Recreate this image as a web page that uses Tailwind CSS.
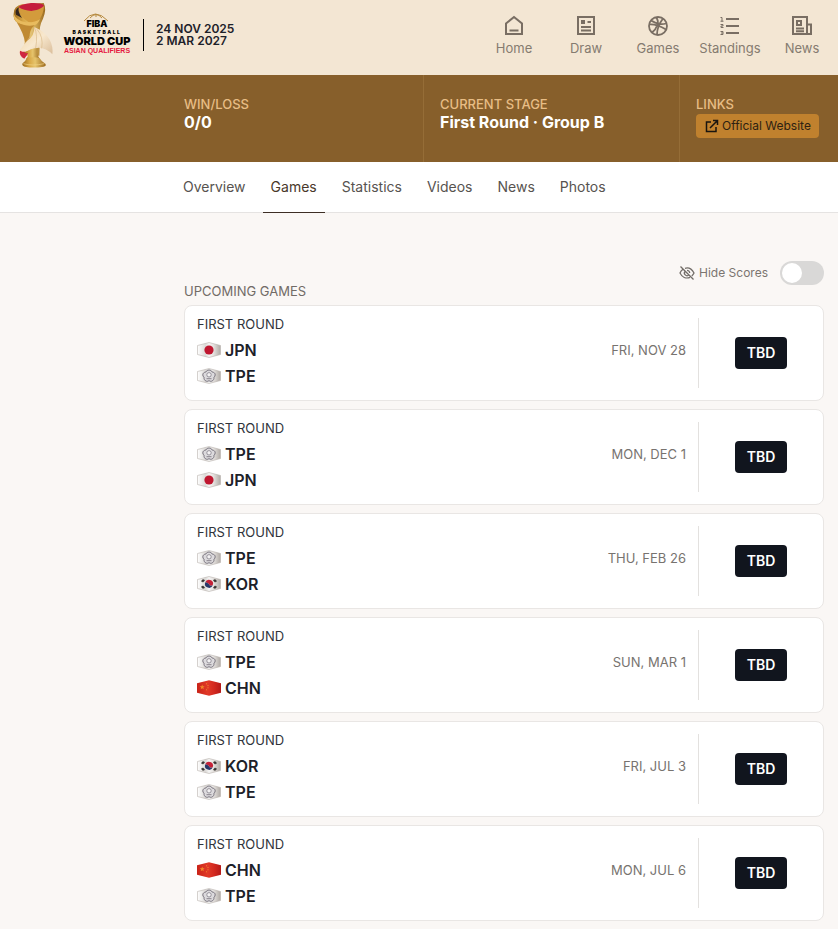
<!DOCTYPE html>
<html lang="en">
<head>
  <meta charset="UTF-8">
  <meta name="viewport" content="width=device-width, initial-scale=1.0">
  <title>Games - FIBA Basketball World Cup Asian Qualifiers</title>
  <script src="https://cdn.jsdelivr.net/npm/@tailwindcss/browser@4"></script>
</head>
<body class="min-h-screen overflow-x-hidden bg-[#faf7f5] font-['Inter','Liberation_Sans',sans-serif] text-[#1d2129]">
  <!-- Flag and gradient definitions -->
  <svg class="absolute h-0 w-0" aria-hidden="true">
    <defs>
      <linearGradient id="silver" x1="0" x2="1">
        <stop offset="0" stop-color="#ffffff"/><stop offset=".35" stop-color="#dcdad7"/><stop offset=".5" stop-color="#f5f5f5"/><stop offset=".7" stop-color="#e4e1de"/><stop offset="1" stop-color="#b0aaa5"/>
      </linearGradient>
      <linearGradient id="red" x1="0" x2="1">
        <stop offset="0" stop-color="#c92318"/><stop offset=".45" stop-color="#e13a28"/><stop offset=".7" stop-color="#d42a20"/><stop offset="1" stop-color="#b51a18"/>
      </linearGradient>
      <symbol id="flag-JPN" viewBox="0 0 24 16">
        <path d="M.5 3.500 12 .5l11.500 3v9L12 15.500.5 12.500z" fill="url(#silver)" stroke="#b8b2ac" stroke-width=".6"/>
        <circle cx="12" cy="8" r="4.600" fill="#bf1730"/>
      </symbol>
      <symbol id="flag-TPE" viewBox="0 0 24 16">
        <path d="M.5 3.500 12 .5l11.500 3v9L12 15.500.5 12.500z" fill="url(#silver)" stroke="#b8b2ac" stroke-width=".6"/>
        <path d="M12 2c1.600 0 2.700.9 3.100 2 1.700.1 3.200 1.200 3.100 2.900 0 1-.5 1.700-1.200 2.300.2 1.700-.6 3.500-2.300 4-1.100.3-2.100 0-2.700-.5-.6.5-1.600.8-2.700.5-1.700-.5-2.500-2.300-2.300-4-.7-.6-1.200-1.300-1.200-2.300 0-1.700 1.400-2.800 3.100-2.900.4-1.100 1.500-2 3.100-2z" fill="#dcdadd" stroke="#77727c" stroke-width="1"/>
        <circle cx="12" cy="6.800" r="2.200" fill="#f3f1f2" stroke="#77727c" stroke-width=".7"/>
        <path d="M9.500 10.700h5" stroke="#88838c"/>
      </symbol>
      <symbol id="flag-KOR" viewBox="0 0 24 16">
        <path d="M.5 3.500 12 .5l11.500 3v9L12 15.500.5 12.500z" fill="url(#silver)" stroke="#b8b2ac" stroke-width=".6"/>
        <path d="M8.200 6.500a4 4 0 0 1 7.600 2.600c-1.300 1.500-2.900.6-3.800-.9-1-1.500-3-2-3.800-1.700z" fill="#c42137"/>
        <path d="M8.200 6.500a4 4 0 0 0 7.600 2.600c-1.300 1.500-2.900.6-3.800-.9-1-1.500-3-2-3.800-1.700z" fill="#283768"/>
        <path d="m4.500 5.500 2-2M5.500 6l2-2M4.500 10.500l2 2M5.500 10l2 2M17.500 3.500l2 2M16.500 4l2 2M17.500 12.500l2-2M16.500 12l2-2" stroke="#393634" stroke-width="1.200"/>
      </symbol>
      <symbol id="flag-CHN" viewBox="0 0 24 16">
        <path d="M0 3.200 12 .3l12 2.900v9.600l-12 2.900-12-2.900z" fill="url(#red)"/>
        <path d="m5.200 4.500.7 1.700 1.800.1-1.400 1.200.5 1.800-1.600-1-1.500 1 .4-1.800-1.400-1.200 1.800-.1z" fill="#f0872a"/>
        <path d="M9 3.800h1M10.500 5.500h1M10.500 7.800h1M9 9.800h1" stroke="#f0872a"/>
      </symbol>
    </defs>
  </svg>

  <header class="flex h-[75px] items-start justify-between bg-[#f3e6d3]">
    <a href="#" class="flex items-start pl-3" aria-label="FIBA Basketball World Cup Asian Qualifiers">
      <!-- Trophy -->
      <svg class="mt-[2px] h-[66px] w-[42px]" viewBox="0 0 126 198" aria-hidden="true">
        <defs>
          <linearGradient id="gold" x1="0" x2="1">
            <stop offset="0" stop-color="#9b6a1d"/><stop offset=".3" stop-color="#d8a746"/><stop offset=".55" stop-color="#e6c46c"/><stop offset="1" stop-color="#9a681c"/>
          </linearGradient>
          <linearGradient id="cream" x1="0" x2="1" y2="1">
            <stop offset="0" stop-color="#efcf9d"/><stop offset=".5" stop-color="#f8e8ce"/><stop offset="1" stop-color="#d7b995"/>
          </linearGradient>
        </defs>
        <path d="M5 35Q5 12 30 7l65-4q10 18-2 47-13 24-9 49l-2 62H38V97Q30 72 15 61 3 52 5 35z" fill="url(#gold)"/>
        <ellipse cx="58" cy="15" rx="38" ry="12" fill="#c51d3d" transform="rotate(-4 58 15)"/>
        <path d="M20 16q16 10 38 11 22-1 38-15-2 24-13 39-20 17-35 8Q23 44 20 16z" fill="#d39b3c"/>
        <path d="M20 16Q17 31 30 48L12 38Q7 24 20 16z" fill="#32251f"/>
        <path d="M5 35q8 21 37 26 28 1 42-10-5 15-17 19-30 3-52-9Q3 51 5 35z" fill="#e8bb5e"/>
        <path d="M14 61q25 14 54 9-16 12-16 40l-12 14q-6-32-26-63z" fill="#c08a33"/>
        <path d="M67 75q32 14 46 38 11 20 8 44-18-20-42-20l-18 5q-20 4-32 23-8-4-6-20 12-17 23-29 21-12 21-41z" fill="url(#cream)"/>
        <path d="M67 75q11 24 4 63M75 82q20 22 14 57M38 124q18-15 25-44" fill="none" stroke="#dab98a" stroke-width="2"/>
        <path d="M24 146q-4 16 13 24l16-22q-18 4-29-2z" fill="#cf2742"/>
        <path d="M36 153q21-15 41-14-3 21 7 33H42q8-9 7-18z" fill="url(#gold)"/>
        <path d="M44 169q20-6 39 0 4 8 17 16 5 8-10 10-27 4-52-1-10-4-6-10 9-7 12-15z" fill="url(#gold)"/>
        <path d="M34 185q27 8 63 0" fill="none" stroke="#f3d588" stroke-width="2"/>
      </svg>
      <div class="ml-2 flex w-[70px] flex-col items-center pt-4 whitespace-nowrap text-black">
        <div class="relative h-3 text-[9px] leading-4 font-black">
          <svg class="absolute -top-1 -left-1 h-3 w-7" viewBox="0 0 28 12" fill="none" stroke="#b68a3f" aria-hidden="true"><path d="M2 9Q13-5 26 9M8 6Q14-1 20 6M14 2v3"/></svg>
          <span class="relative">FIBA</span>
        </div>
        <div class="text-[5px] leading-2 font-black tracking-[.3em]">BASKETBALL</div>
        <div class="text-[11px] leading-[10px] font-black">WORLD CUP</div>
        <div class="font-['Liberation_Sans_Narrow','Liberation_Sans',sans-serif] text-[7px] leading-[10px] font-bold text-[#e51941]">ASIAN QUALIFIERS</div>
      </div>
      <div class="mt-[19px] ml-[11px] h-8 w-px bg-black"></div>
      <div class="mt-[23px] ml-3 text-xs leading-3 font-semibold whitespace-nowrap">24 NOV 2025<br>2 MAR 2027</div>
    </a>
    <nav class="flex pt-3 text-[13px] leading-4 text-[#857b70]" aria-label="Main">
      <a href="#" class="flex w-18 flex-col items-center">
        <svg class="h-7 w-7" viewBox="0 0 28 28" fill="none" stroke="#796e63" stroke-width="2" aria-hidden="true"><path d="M6 11.500 14 5l8 6.500V22H6zM9.500 18.500h9"/></svg>
        Home
      </a>
      <a href="#" class="flex w-18 flex-col items-center">
        <svg class="h-7 w-7" viewBox="0 0 28 28" fill="none" stroke="#796e63" stroke-width="2" aria-hidden="true"><path d="M6 5h16v17H6zM9 15h10M9 18.500h10M15.500 10H19"/><path d="M9 8h4v4H9z" fill="#796e63" stroke="none"/></svg>
        Draw
      </a>
      <a href="#" class="flex w-18 flex-col items-center">
        <svg class="h-7 w-7" viewBox="0 0 28 28" fill="none" stroke="#796e63" stroke-width="1.800" aria-hidden="true"><circle cx="14" cy="14" r="9"/><path d="M5 12.500c6-.5 12 2 17 5M12 5.500c4 4 1 11-4 15M19 6.500c-3 4-6 10-6 16M7 8.500c6 4 11 4 15 3"/></svg>
        Games
      </a>
      <a href="#" class="flex w-18 flex-col items-center">
        <svg class="h-7 w-7" viewBox="0 0 28 28" fill="none" stroke="#796e63" aria-hidden="true"><path d="M10 7H23M10 14H23M10 21H23" stroke-width="2"/><path d="M4.500 5.500h1.500v4M4.500 9.200h3M4.500 12.500h2.500v1.500H5v1.500h2.500M4.500 19.500h2.500v3H4.500M5 21h2"/></svg>
        Standings
      </a>
      <a href="#" class="flex w-18 flex-col items-center">
        <svg class="h-7 w-7" viewBox="0 0 28 28" fill="none" stroke="#796e63" stroke-width="2" aria-hidden="true"><path d="M19 22H5V5h14zM19 12.500h4V22h-4M8 16.500h8M8 19.300h8"/><path d="M9 9h4v4H9z"/></svg>
        News
      </a>
    </nav>
  </header>

  <!-- Team summary -->
  <section class="flex h-[87px] bg-[#875f2b] pl-[168px] text-white">
    <div class="w-64 shrink-0 border-r border-[#956d37] px-4 pt-5">
      <h2 class="text-[13px] leading-[18px] font-medium text-[#e8bd85]">WIN/LOSS</h2>
      <p class="text-base leading-[18px] font-bold">0/0</p>
    </div>
    <div class="w-64 shrink-0 border-r border-[#956d37] px-4 pt-5">
      <h2 class="text-[13px] leading-[18px] font-medium text-[#e8bd85]">CURRENT STAGE</h2>
      <p class="text-base leading-[18px] font-bold whitespace-nowrap">First Round · Group B</p>
    </div>
    <div class="flex flex-1 flex-col items-start px-4 pt-5">
      <h2 class="text-[13px] leading-[18px] font-medium text-[#e8bd85]">LINKS</h2>
      <a href="#" class="mt-px inline-flex h-6 items-center gap-0.5 rounded bg-[#c0812e] px-2 text-xs whitespace-nowrap text-[#2e2112]">
        <svg class="h-4 w-4" viewBox="0 0 16 16" fill="none" stroke="#19150f" stroke-width="1.500" aria-hidden="true"><path d="M7 4H2.500v9.500H12V9M9 2.500h4.500V7M13.500 2.500 6 10"/></svg>
        Official Website
      </a>
    </div>
  </section>

  <nav class="flex h-[51px] gap-[9px] border-b border-[#e5e3e2] bg-white pl-[175px] text-sm text-[#57534f]" aria-label="Team">
    <a href="#" class="flex h-[51px] items-center border-b border-transparent px-2">Overview</a>
    <a href="#" class="flex h-[51px] items-center border-b border-[#3d2e25] px-2 text-[#49382a]" aria-current="page">Games</a>
    <a href="#" class="flex h-[51px] items-center border-b border-transparent px-2">Statistics</a>
    <a href="#" class="flex h-[51px] items-center border-b border-transparent px-2">Videos</a>
    <a href="#" class="flex h-[51px] items-center border-b border-transparent px-2">News</a>
    <a href="#" class="flex h-[51px] items-center border-b border-transparent px-2">Photos</a>
  </nav>

  <main class="pt-12 pr-3.5 pb-2 pl-[184px]">
    <div class="flex h-6 items-center justify-end gap-3">
      <label for="hideScores" class="flex items-center gap-1 text-xs text-[#7b7570]">
        <svg class="h-4 w-4" viewBox="0 0 16 16" fill="none" stroke="#716c67" stroke-width="1.300" aria-hidden="true"><path d="m1.500 1.500 13 13M6 3.300c4-1.200 7 1 9 4.700-.6 1.200-1.300 2.200-2.200 3M11 12.400C7 14 3 12 1 8c.7-1.500 1.600-2.700 2.700-3.500M6.200 6.200a2.600 2.600 0 0 0 3.700 3.700M8 5.300A2.700 2.700 0 0 1 10.700 8"/></svg>
        Hide Scores
      </label>
      <input id="hideScores" type="checkbox" role="switch" class="relative h-6 w-11 cursor-pointer appearance-none rounded-full bg-[#d9d8d7] before:absolute before:top-0.5 before:left-0.5 before:h-5 before:w-5 before:rounded-full before:bg-white checked:bg-[#875f2b] checked:before:left-[22px]">
    </div>
    <h1 class="text-[13px] leading-3 text-[#716b66]">UPCOMING GAMES</h1>
    <div id="games" class="mt-2 flex flex-col gap-2"></div>
  </main>

  <script>
    const games = [
      { date: 'FRI, NOV 28', teams: ['JPN', 'TPE'] },
      { date: 'MON, DEC 1', teams: ['TPE', 'JPN'] },
      { date: 'THU, FEB 26', teams: ['TPE', 'KOR'] },
      { date: 'SUN, MAR 1', teams: ['TPE', 'CHN'] },
      { date: 'FRI, JUL 3', teams: ['KOR', 'TPE'] },
      { date: 'MON, JUL 6', teams: ['CHN', 'TPE'] }
    ];

    const teamRow = (team) => `
      <div class="flex h-[26px] items-center gap-1 text-base font-semibold">
        <svg class="h-4 w-6" aria-hidden="true"><use href="#flag-${team}"/></svg>
        ${team}
      </div>`;

    document.getElementById('games').innerHTML = games.map((game) => `
      <article class="flex h-24 items-stretch rounded-lg border border-[#e9e6e4] bg-white py-3 pl-3">
        <div class="flex-1">
          <h2 class="-mt-1 text-[13px] leading-5 text-[#30343b]">FIRST ROUND</h2>
          <div class="mt-[3px]">${game.teams.map(teamRow).join('')}</div>
        </div>
        <time class="flex items-center pr-3 pb-1 text-[13px] text-[#77736f]">${game.date}</time>
        <div class="flex w-[125px] items-center justify-center border-l border-[#e3e1df]">
          <button class="h-8 rounded bg-[#11151e] px-3 text-sm font-semibold text-white">TBD</button>
        </div>
      </article>`).join('');
  </script>
</body>
</html>
